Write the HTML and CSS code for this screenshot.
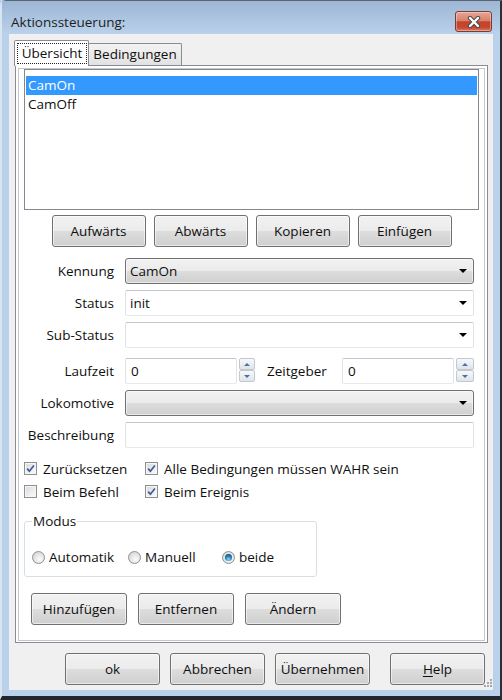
FILE: index.html
```html
<!DOCTYPE html>
<html lang="de">
<head>
<meta charset="utf-8">
<title>Aktionssteuerung</title>
<link rel="stylesheet" href="styles.css">
</head>
<body>
<div class="window">
  <div class="titlebar">
    <span class="title">Aktionssteuerung:</span>
    <button class="close" type="button" aria-label="Schließen">
      <svg width="14" height="12" viewBox="0 0 14 12" aria-hidden="true">
        <path d="M3 2 L11 10 M11 2 L3 10" stroke="#4a4a4a" stroke-width="4.4" stroke-linecap="round" fill="none"/>
        <path d="M3 2 L11 10 M11 2 L3 10" stroke="#ffffff" stroke-width="2.4" stroke-linecap="round" fill="none"/>
      </svg>
    </button>
  </div>
  <div class="frame">
    <div class="client">
      <div class="tabs">
        <div class="tab active"><span class="focus">Übersicht</span></div>
        <div class="tab inactive">Bedingungen</div>
      </div>
      <div class="panel">
        <div class="page">
          <div class="listbox">
            <div class="item selected">CamOn</div>
            <div class="item">CamOff</div>
          </div>
          <div class="btnrow-top">
            <button class="btn" type="button">Aufwärts</button>
            <button class="btn" type="button">Abwärts</button>
            <button class="btn" type="button">Kopieren</button>
            <button class="btn" type="button">Einfügen</button>
          </div>
          <div class="form">
            <span class="lbl">Kennung</span>
            <div class="combo grey"><span class="val">CamOn</span><i class="arrow"></i></div>

            <span class="lbl">Status</span>
            <div class="combo white"><span class="val">init</span><i class="arrow"></i></div>

            <span class="lbl">Sub-Status</span>
            <div class="combo white"><span class="val"></span><i class="arrow"></i></div>

            <span class="lbl">Laufzeit</span>
            <div class="numrow">
              <div class="num">0</div>
              <div class="spin s1"><span class="sb"><i class="up"></i></span><span class="sb"><i class="down"></i></span></div>
              <span class="lbl2">Zeitgeber</span>
              <div class="num">0</div>
              <div class="spin s2"><span class="sb"><i class="up"></i></span><span class="sb"><i class="down"></i></span></div>
            </div>

            <span class="lbl">Lokomotive</span>
            <div class="combo grey"><span class="val"></span><i class="arrow"></i></div>

            <span class="lbl">Beschreibung</span>
            <div class="combo white text"></div>
          </div>

          <div class="checkgrid">
            <label class="check"><span class="cb on"><svg width="11" height="11" viewBox="0 0 11 11"><path d="M2.2 5.6 L4.4 8.2 L8.9 2.4" stroke="#3f5a92" stroke-width="1.7" fill="none"/></svg></span>Zurücksetzen</label>
            <label class="check"><span class="cb on"><svg width="11" height="11" viewBox="0 0 11 11"><path d="M2.2 5.6 L4.4 8.2 L8.9 2.4" stroke="#3f5a92" stroke-width="1.7" fill="none"/></svg></span>Alle Bedingungen müssen WAHR sein</label>
            <label class="check"><span class="cb"></span>Beim Befehl</label>
            <label class="check"><span class="cb on"><svg width="11" height="11" viewBox="0 0 11 11"><path d="M2.2 5.6 L4.4 8.2 L8.9 2.4" stroke="#3f5a92" stroke-width="1.7" fill="none"/></svg></span>Beim Ereignis</label>
          </div>

          <fieldset class="group">
            <legend>Modus</legend>
            <div class="radios">
              <label class="radio r1"><span class="rb"></span>Automatik</label>
              <label class="radio r2"><span class="rb"></span>Manuell</label>
              <label class="radio"><span class="rb on"></span>beide</label>
            </div>
          </fieldset>

          <div class="btnrow-bottom">
            <button class="btn w96" type="button">Hinzufügen</button>
            <button class="btn w96" type="button">Entfernen</button>
            <button class="btn w96" type="button">Ändern</button>
          </div>
        </div>
      </div>
      <div class="dlg-buttons">
        <button class="btn w95" type="button">ok</button>
        <button class="btn w95" type="button">Abbrechen</button>
        <button class="btn w95" type="button">Übernehmen</button>
        <button class="btn w95 help" type="button"><u>H</u>elp</button>
      </div>
      <svg class="grip" width="10" height="10" viewBox="0 0 10 10" aria-hidden="true">
        <rect x="8" y="0" width="2" height="2" fill="#a3a8ae"/>
        <rect x="5" y="3" width="2" height="2" fill="#a3a8ae"/>
        <rect x="8" y="3" width="2" height="2" fill="#a3a8ae"/>
        <rect x="2" y="6" width="2" height="2" fill="#a3a8ae"/>
        <rect x="5" y="6" width="2" height="2" fill="#a3a8ae"/>
        <rect x="8" y="6" width="2" height="2" fill="#a3a8ae"/>
      </svg>
    </div>
  </div>
</div>
</body>
</html>
```

FILE: styles.css
```css
* { box-sizing: border-box; }
html, body { margin: 0; padding: 0; }
body {
  width: 502px;
  height: 700px;
  overflow: hidden;
  font-family: "Open Sans", "Noto Sans", sans-serif;
  font-size: 13.5px;
  color: #0f0f0f;
  background: #b9d1ea;
}

.window {
  width: 502px;
  height: 700px;
  display: flex;
  flex-direction: column;
  background: #b9d1ea;
  border-top: 1px solid #5a6470;
  border-left: 2px solid #dae5f2;
  border-right: 2px solid #2b3036;
  border-bottom: 4px solid #22272c;
  border-top-left-radius: 6px;
}

.titlebar {
  height: 33px;
  flex: none;
  display: flex;
  align-items: flex-start;
  padding: 0 8px 0 9px;
  background: linear-gradient(#9db6d4, #b9d1ea);
}
.title {
  margin-top: 12px;
  line-height: 18px;
  color: #1e1e1e;
}
.close {
  margin-left: auto;
  margin-top: 10px;
  width: 37px;
  height: 21px;
  padding: 0;
  border: 1px solid #7b3b31;
  border-radius: 3px;
  background: linear-gradient(#e8a596 0%, #d8816d 45%, #c4432c 52%, #c5462f 80%, #d97a63 100%);
  box-shadow: inset 0 0 0 1px rgba(255,255,255,0.35);
  display: flex;
  align-items: center;
  justify-content: center;
}

.frame {
  flex: 1;
  display: flex;
  padding: 0 7px 6px 7px;
}
.client {
  flex: 1;
  position: relative;
  background: #f0f0f0;
  padding: 6px 5px 5px 5px;
}

/* tabs */
.tabs {
  display: flex;
  align-items: flex-end;
  height: 26px;
  margin-bottom: -1px;
  position: relative;
  z-index: 1;
}
.tab {
  border: 1px solid #898c95;
  border-bottom: none;
  white-space: nowrap;
}
.tab.active {
  position: relative;
  z-index: 2;
  width: 75px;
  height: 26px;
  background: #fff;
  padding: 2px 1px 0 2px;
  border-radius: 2px 2px 0 0;
}
.focus {
  display: block;
  height: 21px;
  border: 1px dotted #222;
  text-align: center;
  line-height: 19px;
}
.tab.inactive {
  width: 94px;
  height: 22px;
  margin-left: -1px;
  margin-bottom: 1px;
  background: linear-gradient(#f3f3f3, #e2e2e2);
  text-align: center;
  line-height: 21px;
  border-radius: 2px 2px 0 0;
}

.panel {
  margin-left: 1px;
  width: 473px;
  border: 1px solid #898c95;
  padding: 2px 2px 1px 2px;
  background: #fff;
}
.page {
  border: 1px solid #c4c7cc;
  padding: 0 5px 15px 5px;
  background: #fff;
}

.listbox {
  height: 141px;
  border: 1px solid #828790;
  padding: 6px 1px 0 1px;
  background: #fff;
}
.item {
  height: 19px;
  line-height: 19px;
  padding-left: 2px;
}
.item.selected {
  background: #3399ff;
  color: #fff;
}

.btn {
  height: 32px;
  width: 94px;
  padding: 0;
  font: inherit;
  color: #0f0f0f;
  border: 1px solid #707070;
  border-radius: 3px;
  background: linear-gradient(#f2f2f2 0%, #ebebeb 50%, #dddddd 51%, #cfcfcf 100%);
  box-shadow: inset 0 0 0 1px rgba(255,255,255,0.55);
}
.btn.w96 { width: 96px; }
.btn.w95 { width: 95px; }

.btnrow-top {
  margin-top: 5px;
  display: flex;
  justify-content: center;
  gap: 8px;
}

/* form */
.form {
  margin-top: 11px;
  display: grid;
  grid-template-columns: 90px 349px;
  grid-template-rows: 26px 26px 26px 30px 26px 26px;
  column-gap: 11px;
  row-gap: 6px;
  align-items: end;
}
.lbl {
  text-align: right;
  line-height: 27px;
  height: 26px;
  white-space: nowrap;
}
.combo {
  height: 26px;
  display: flex;
  align-items: center;
  padding-left: 4px;
}
.combo.grey {
  border: 1px solid #707070;
  border-radius: 3px;
  background: linear-gradient(#f2f2f2 0%, #ebebeb 50%, #dddddd 51%, #cfcfcf 100%);
  box-shadow: inset 0 0 0 1px rgba(255,255,255,0.55);
}
.combo.white {
  border: 1px solid;
  border-color: #c3c6cc #dfe3e8 #e6e9ee #dfe3e8;
  border-radius: 2px;
  background: #fff;
}
.arrow {
  margin-left: auto;
  margin-right: 6px;
  width: 0;
  height: 0;
  border-left: 4px solid transparent;
  border-right: 4px solid transparent;
  border-top: 4px solid #000;
}

.numrow {
  display: flex;
  align-items: flex-start;
  height: 26px;
}
.num {
  width: 112px;
  height: 26px;
  border: 1px solid;
  border-color: #c3c6cc #dfe3e8 #e6e9ee #dfe3e8;
  border-radius: 2px;
  background: #fff;
  padding-left: 5px;
  line-height: 24px;
}
.spin {
  margin-left: 2px;
  display: flex;
  flex-direction: column;
}
.spin.s1 { width: 16px; }
.spin.s2 { width: 18px; }
.sb {
  height: 12px;
  border: 1px solid #c2c8d0;
  border-radius: 2px;
  background: linear-gradient(#f7f8fa, #dfe4ea);
  display: flex;
  align-items: center;
  justify-content: center;
}
.up, .down {
  width: 0;
  height: 0;
  border-left: 3px solid transparent;
  border-right: 3px solid transparent;
}
.up { border-bottom: 3px solid #4e6ea8; }
.down { border-top: 3px solid #4e6ea8; }
.lbl2 {
  flex: 1;
  margin-left: 12px;
  line-height: 26px;
}

/* checkboxes */
.checkgrid {
  margin-top: 9px;
  display: grid;
  grid-template-columns: 121px auto;
  grid-auto-rows: 23px;
  align-items: center;
}
.check {
  display: flex;
  align-items: center;
  gap: 6px;
  white-space: nowrap;
}
.cb {
  width: 13px;
  height: 13px;
  flex: none;
  border: 1px solid #8e8f8f;
  background: linear-gradient(135deg, #d6d8db 0%, #f2f2f2 70%, #fbfbfb 100%);
  box-shadow: inset 0 0 0 1px #f6f6f6;
  display: flex;
  align-items: center;
  justify-content: center;
}
.cb svg { display: block; }

/* group */
.group {
  margin: 10px 0 0 0;
  width: 293px;
  min-width: 0;
  border: 1px solid #d5dfe5;
  border-radius: 3px;
  padding: 18px 0 9px 7px;
}
.group legend {
  padding: 0 1px;
  line-height: 16px;
}
.radios {
  display: flex;
  align-items: center;
  height: 20px;
}
.radio {
  display: flex;
  align-items: center;
  gap: 4px;
  white-space: nowrap;
}
.radio.r1 { width: 96px; }
.radio.r2 { width: 94px; }
.rb {
  width: 13px;
  height: 13px;
  flex: none;
  border-radius: 50%;
  border: 1px solid #8e8f8f;
  background: radial-gradient(circle at 60% 65%, #fbfbfb 0%, #e6e6e6 45%, #cfd0d2 100%);
  display: flex;
  align-items: center;
  justify-content: center;
}
.rb.on::after {
  content: "";
  width: 7px;
  height: 7px;
  border-radius: 50%;
  background: radial-gradient(circle at 50% 75%, #8fd6f8 0%, #2a86bd 45%, #0c3d6b 90%);
}

.btnrow-bottom {
  margin-top: 16px;
  padding-left: 7px;
  display: flex;
  gap: 11px;
}

.dlg-buttons {
  margin-top: 10px;
  display: flex;
  justify-content: flex-end;
  gap: 10px;
  padding-right: 3px;
}
.btn.help { margin-left: 10px; }
.btn u { text-underline-offset: 2px; }

.grip {
  position: absolute;
  right: 1px;
  bottom: 1px;
}
```
